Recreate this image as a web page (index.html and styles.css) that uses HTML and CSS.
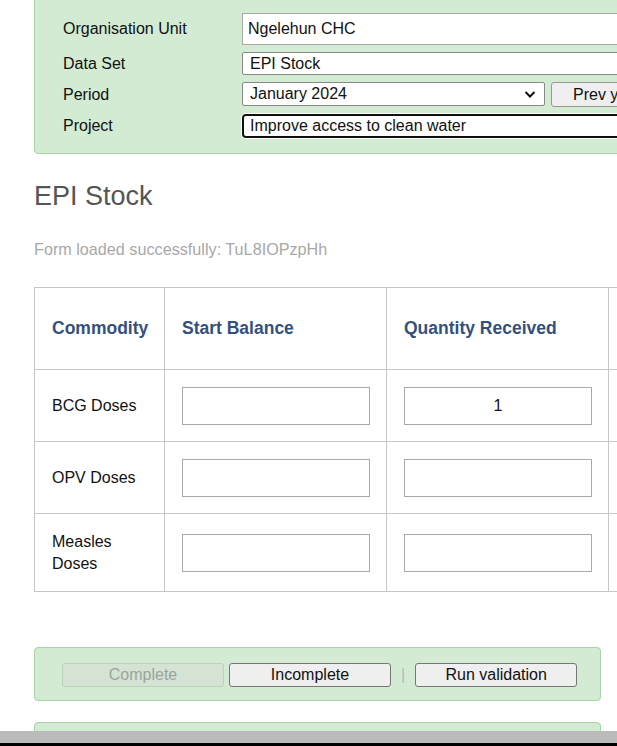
FILE: index.html
```html
<!DOCTYPE html>
<html>
<head>
<meta charset="utf-8">
<link rel="stylesheet" href="styles.css">
</head>
<body>
<div class="page">
  <div class="box selection">
    <div class="sel-row">
      <div class="sel-label">Organisation Unit</div>
      <div class="field org">Ngelehun CHC</div>
    </div>
    <div class="sel-row">
      <div class="sel-label">Data Set</div>
      <div class="field ds">EPI Stock</div>
    </div>
    <div class="sel-row">
      <div class="sel-label">Period</div>
      <div class="period-wrap">
        <div class="field period">
          <span>January 2024</span>
          <svg class="chev" width="14" height="10" viewBox="0 0 14 10"><path d="M2.5 3 L7 7.5 L11.5 3" fill="none" stroke="#111" stroke-width="2"/></svg>
        </div>
        <div class="prev-btn">Prev year</div>
      </div>
    </div>
    <div class="sel-row">
      <div class="sel-label">Project</div>
      <div class="field project">Improve access to clean water</div>
    </div>
  </div>

  <h1 class="title">EPI Stock</h1>
  <p class="status">Form loaded successfully: TuL8IOPzpHh</p>

  <table class="grid">
    <colgroup>
      <col class="c1"><col class="c2"><col class="c3"><col class="c4">
    </colgroup>
    <thead>
      <tr>
        <th>Commodity</th>
        <th>Start Balance</th>
        <th>Quantity Received</th>
        <th>End Balance</th>
      </tr>
    </thead>
    <tbody>
      <tr>
        <td>BCG Doses</td>
        <td><div class="cell-input"></div></td>
        <td><div class="cell-input">1</div></td>
        <td><div class="cell-input"></div></td>
      </tr>
      <tr>
        <td>OPV Doses</td>
        <td><div class="cell-input"></div></td>
        <td><div class="cell-input"></div></td>
        <td><div class="cell-input"></div></td>
      </tr>
      <tr>
        <td>Measles Doses</td>
        <td><div class="cell-input"></div></td>
        <td><div class="cell-input"></div></td>
        <td><div class="cell-input"></div></td>
      </tr>
    </tbody>
  </table>

  <div class="box actions">
    <div class="btn disabled">Complete</div>
    <div class="btn">Incomplete</div>
    <span class="sep">|</span>
    <div class="btn">Run validation</div>
  </div>

  <div class="box next"></div>
</div>
<div class="hscroll"></div>
</body>
</html>
```
FILE: styles.css
```css
html, body {
  margin: 0;
  padding: 0;
  overflow: hidden;
  background: #fff;
}
body {
  font-family: "Liberation Sans", Arial, sans-serif;
  color: #111;
  width: 617px;
  height: 746px;
  position: relative;
}
.page {
  padding-left: 34px;
  width: 567px;
}
.box {
  background: #d3ebd3;
  border: 1px solid #a6d4a6;
  border-radius: 4px;
  box-sizing: border-box;
}
.selection {
  margin-top: -10px;
  width: 760px;
  padding: 22px 0 15px 28px;
  display: flex;
  flex-direction: column;
  gap: 7px;
}
.sel-row {
  display: flex;
  align-items: center;
}
.sel-label {
  width: 179px;
  flex-shrink: 0;
  font-size: 16px;
  color: #111;
}
.field {
  flex-shrink: 0;
  background: #fff;
  border: 1px solid #a9a9a9;
  box-sizing: border-box;
  font-size: 16px;
  color: #111;
  display: flex;
  align-items: center;
  white-space: nowrap;
}
.org {
  width: 500px;
  height: 32px;
  padding-left: 5px;
}
.ds {
  width: 500px;
  height: 23px;
  padding-left: 7px;
  border-color: #888;
  border-radius: 2px;
}
.period-wrap {
  display: flex;
  gap: 6px;
  flex-shrink: 0;
}
.period {
  width: 303px;
  height: 24px;
  padding-left: 7px;
  border-color: #888;
  border-radius: 2px;
  justify-content: space-between;
  padding-right: 7px;
}
.chev {
  display: block;
}
.prev-btn {
  width: 120px;
  height: 25px;
  box-sizing: border-box;
  background: #efefef;
  border: 1px solid #999;
  border-radius: 3px;
  font-size: 16px;
  padding-left: 21px;
  display: flex;
  align-items: center;
  white-space: nowrap;
}
.project {
  width: 500px;
  height: 24px;
  padding-left: 6px;
  border: 2px solid #111;
  border-radius: 4px;
  box-shadow: 0 0 0 1px #fff;
}
.title {
  margin: 27px 0 0 0;
  font-size: 27px;
  line-height: 31px;
  font-weight: normal;
  color: #555;
}
.status {
  margin: 28px 0 0 0;
  font-size: 16.2px;
  line-height: 18px;
  color: #a8a8a8;
}
.grid {
  margin-top: 29px;
  border-collapse: collapse;
  table-layout: fixed;
  width: 796px;
}
.c1 { width: 130px; }
.c2 { width: 222px; }
.c3 { width: 222px; }
.c4 { width: 222px; }
.grid th, .grid td {
  border: 1px solid #c6c6c6;
  text-align: left;
  vertical-align: middle;
}
.grid th {
  font-size: 17.5px;
  font-weight: bold;
  color: #34507d;
  padding: 29px 16px 29px 17px;
  line-height: 23px;
  white-space: nowrap;
}
.grid td {
  font-size: 16px;
  line-height: 22px;
  padding: 16.5px 16px 16.5px 17px;
  color: #111;
}
.cell-input {
  height: 38px;
  box-sizing: border-box;
  border: 1px solid #a9a9a9;
  background: #fff;
  text-align: center;
  line-height: 36px;
  font-size: 16px;
}
.actions {
  margin-top: 55px;
  height: 54px;
  display: flex;
  align-items: center;
  padding-left: 27px;
  padding-top: 1px;
  gap: 5px;
}
.btn {
  width: 162px;
  height: 24px;
  box-sizing: border-box;
  background: #efefef;
  border: 1px solid #767676;
  border-radius: 3px;
  font-size: 16px;
  color: #111;
  display: flex;
  align-items: center;
  justify-content: center;
}
.btn.disabled {
  background: #d5e3d5;
  border-color: #b9d2b9;
  color: #9aa59a;
}
.sep {
  color: #b8b8b8;
  font-size: 16px;
  margin: 0 5px;
}
.next {
  margin-top: 21px;
  height: 40px;
}
.hscroll {
  position: fixed;
  left: 0;
  right: 0;
  bottom: 0;
  height: 15px;
  background: #bbbbbb;
  border-bottom: 3px solid #000;
  box-sizing: border-box;
}
```
